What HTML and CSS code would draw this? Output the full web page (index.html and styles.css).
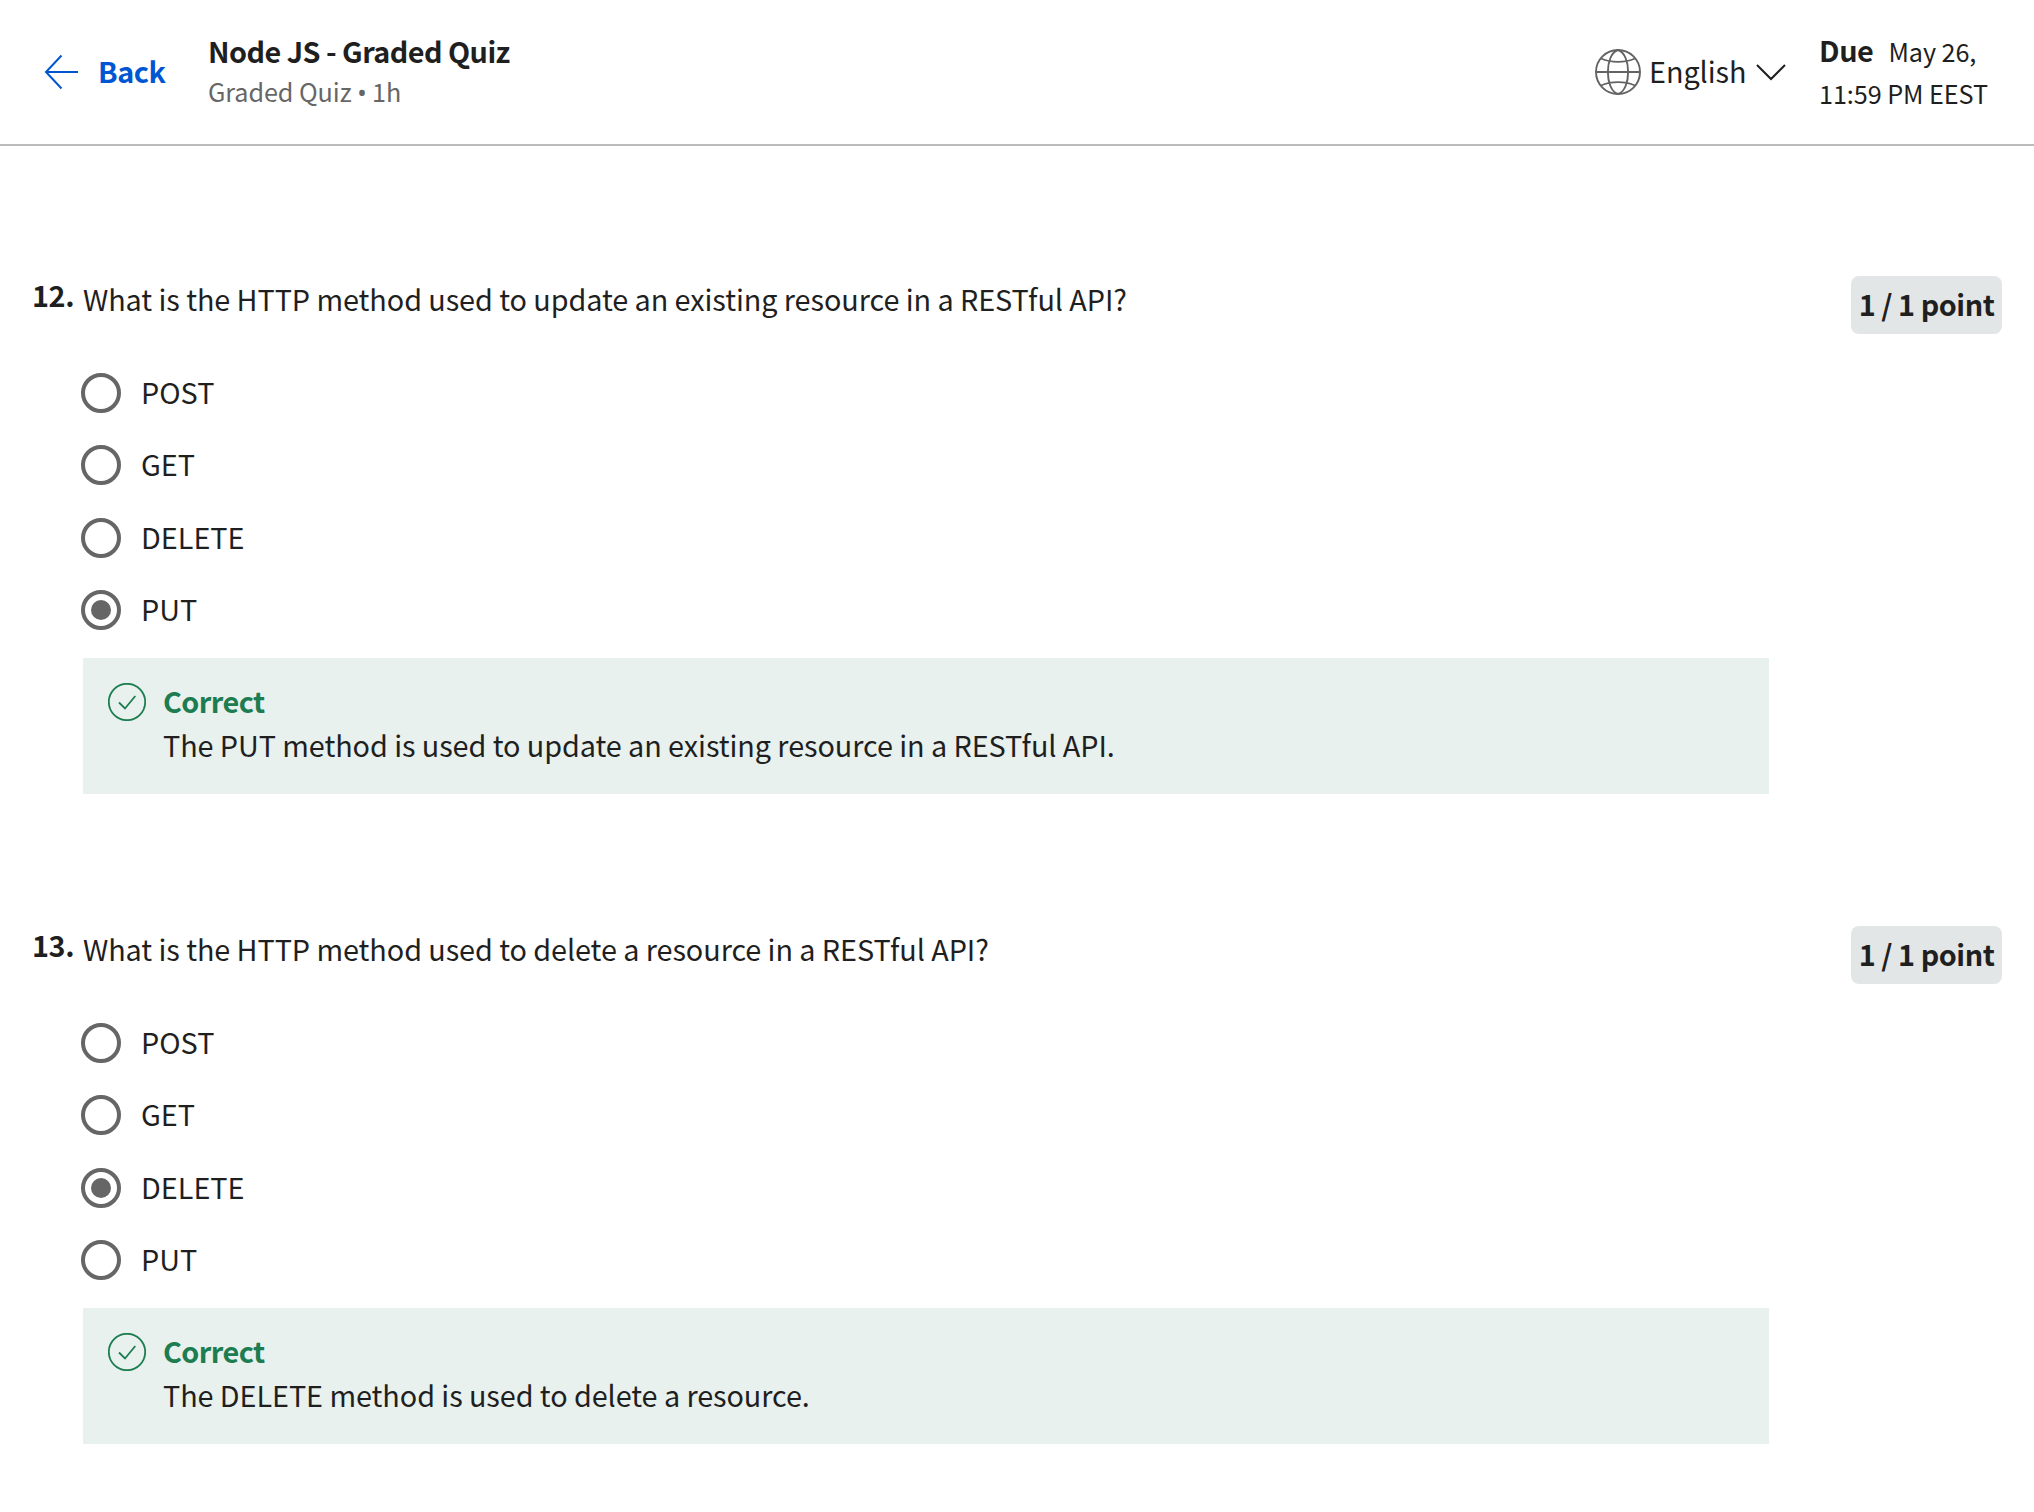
FILE: index.html
```html
<!DOCTYPE html>
<html lang="en">
<head>
<meta charset="utf-8">
<title>Node JS - Graded Quiz</title>
<link rel="stylesheet" href="styles.css">
</head>
<body>
<header class="header">
  <a class="back">
    <svg class="back-arrow" width="34" height="36" viewBox="0 0 34 36"><path d="M34 18H2M17.5 1.5L2 18L17.5 34.5"/></svg>
    <span class="back-text">Back</span>
  </a>
  <div class="heading">
    <h1 class="title">Node JS - Graded Quiz</h1>
    <p class="subtitle">Graded Quiz <span class="bullet">•</span> 1h</p>
  </div>
  <div class="language">
    <svg class="globe" width="46" height="46" viewBox="0 0 46 46"><circle cx="23" cy="23" r="22"/><path d="M1 23H45M6 9.5C16 14 30 14 40 9.5M6 36.5C16 32 30 32 40 36.5M23 1C9.5 5 9.5 41 23 45M23 1C36.5 5 36.5 41 23 45"/></svg>
    <span class="language-name">English</span>
    <svg class="chevron" width="30" height="18" viewBox="0 0 30 18"><path d="M1 2L15 16L29 2"/></svg>
  </div>
  <div class="due">
    <div class="due-line"><strong class="due-label">Due</strong><span>May 26,</span></div>
    <div class="due-line">11:59 PM EEST</div>
  </div>
</header>
<main class="quiz">
  <section class="question">
    <div class="number">12.</div>
    <div class="body">
      <p class="prompt">What is the HTTP method used to update an existing resource in a RESTful API?</p>
      <ul class="options">
        <li class="option"><span class="radio"></span><span class="label">POST</span></li>
        <li class="option"><span class="radio"></span><span class="label">GET</span></li>
        <li class="option"><span class="radio"></span><span class="label">DELETE</span></li>
        <li class="option"><span class="radio checked"></span><span class="label">PUT</span></li>
      </ul>
      <div class="feedback">
        <svg class="check" width="38" height="38" viewBox="0 0 38 38"><circle cx="19" cy="19" r="18.2"/><path d="M11 19.5L17 25.5L27.3 13"/></svg>
        <div>
          <p class="verdict">Correct</p>
          <p class="explanation">The PUT method is used to update an existing resource in a RESTful API.</p>
        </div>
      </div>
    </div>
    <div class="points">1 / 1 point</div>
  </section>
  <section class="question">
    <div class="number">13.</div>
    <div class="body">
      <p class="prompt">What is the HTTP method used to delete a resource in a RESTful API?</p>
      <ul class="options">
        <li class="option"><span class="radio"></span><span class="label">POST</span></li>
        <li class="option"><span class="radio"></span><span class="label">GET</span></li>
        <li class="option"><span class="radio checked"></span><span class="label">DELETE</span></li>
        <li class="option"><span class="radio"></span><span class="label">PUT</span></li>
      </ul>
      <div class="feedback">
        <svg class="check" width="38" height="38" viewBox="0 0 38 38"><circle cx="19" cy="19" r="18.2"/><path d="M11 19.5L17 25.5L27.3 13"/></svg>
        <div>
          <p class="verdict">Correct</p>
          <p class="explanation">The DELETE method is used to delete a resource.</p>
        </div>
      </div>
    </div>
    <div class="points">1 / 1 point</div>
  </section>
</main>
</body>
</html>
```
FILE: styles.css
```css
* { box-sizing: border-box; margin: 0; padding: 0; }
body {
  background: #fff;
  color: #1f1f1f;
  font-family: "Source Sans Pro", "Noto Sans CJK SC", sans-serif;
  font-size: 28.8px;
  line-height: 44px;
  letter-spacing: -0.07px;
  white-space: nowrap;
  overflow: hidden;
}
svg { display: block; fill: none; flex: none; }
.header {
  display: flex;
  height: 146px;
  padding-left: 44px;
  border-bottom: 2px solid #bbb;
}
.back {
  display: flex;
  align-items: center;
  width: 164px;
  gap: 20px;
  color: #0056d2;
  font-weight: 700;
  letter-spacing: -0.4px;
}
.back-text { padding-bottom: 2px; }
.back-arrow { stroke: #0056d2; stroke-width: 2; }
.heading { flex: 1; padding-top: 29px; }
.title { font-size: 28.8px; font-weight: 700; line-height: 44px; letter-spacing: -0.54px; }
.subtitle { color: #666; font-size: 25.2px; line-height: 36px; }
.bullet { font-family: "Noto Sans", sans-serif; line-height: 1; }
.language { display: flex; align-items: center; width: 224px; }
.globe { stroke: #636363; stroke-width: 1.9; }
.language-name { width: 104px; padding: 0 0 2px 8px; }
.chevron { margin-left: 11px; stroke: #1f1f1f; stroke-width: 2; }
.due { width: 215px; padding-top: 29px; font-size: 25.2px; line-height: 42px; }
.due-line { height: 43px; }
.due-label { margin-right: 15px; font-size: 28.8px; letter-spacing: -0.4px; }
.quiz { padding: 130px 32px 0 32px; }
.question { display: flex; height: 650px; }
.number { width: 51px; font-weight: 700; line-height: 38px; letter-spacing: -0.4px; }
.body { width: 1686px; }
.prompt { padding-top: 1px; }
.options { list-style: none; margin-top: 36px; }
.option { display: flex; align-items: center; height: 72.33px; }
.radio {
  display: grid;
  place-items: center;
  width: 40px;
  height: 40px;
  margin-left: -2px;
  border: 4px solid #666;
  border-radius: 50%;
}
.checked::after { content: ""; width: 20px; height: 20px; border-radius: 50%; background: #666; }
.label { margin-left: 20px; padding-bottom: 2px; letter-spacing: 0; }
.feedback {
  display: flex;
  height: 136px;
  margin-top: 12px;
  padding: 25px 25px 0;
  gap: 17px;
  background: #e8f1ee;
}
.check { stroke: #1d7c50; stroke-width: 1.8; }
.verdict { margin-top: -4px; color: #1d7c50; font-weight: 700; letter-spacing: -0.54px; }
.points {
  width: 151px;
  height: 58px;
  margin-left: auto;
  border-radius: 8px;
  background: #e3e6e7;
  font-weight: 700;
  line-height: 56px;
  letter-spacing: -0.45px;
  text-align: center;
}
```
